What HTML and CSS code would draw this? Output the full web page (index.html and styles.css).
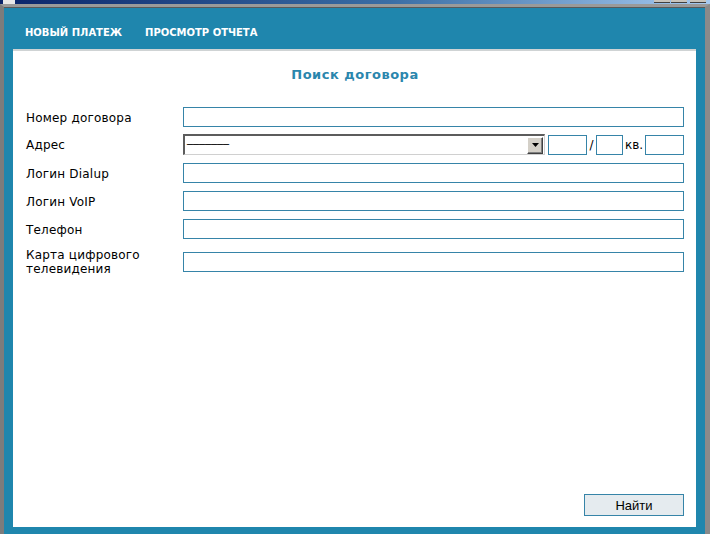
FILE: index.html
```html
<!DOCTYPE html>
<html lang="ru">
<head>
<meta charset="utf-8">
<title>Поиск договора</title>
<link rel="stylesheet" href="styles.css">
</head>
<body>
<div class="window">
  <div class="titlebar">
    <span class="tb-icon"></span>
    <span class="tb-buttons">
      <span class="tb-btn"></span><span class="tb-btn"></span><span class="tb-btn tb-close"></span>
    </span>
  </div>
  <div class="app">
    <nav class="nav">
      <a class="nav-item" href="#">НОВЫЙ ПЛАТЕЖ</a>
      <a class="nav-item" href="#">ПРОСМОТР ОТЧЕТА</a>
    </nav>
    <main class="panel">
      <h1 class="title">Поиск договора</h1>
      <form class="form">
        <div class="row">
          <label class="label">Номер договора</label>
          <input class="field" type="text">
        </div>
        <div class="row row-address">
          <label class="label">Адрес</label>
          <div class="address">
            <div class="select" role="combobox">
              <span class="select-value">───────</span>
              <span class="select-arrow"><svg width="7" height="4" viewBox="0 0 7 4"><path d="M0 0H7L3.5 4Z" fill="#000"/></svg></span>
            </div>
            <input class="field field-house" type="text">
            <span class="sep sep-slash">/</span>
            <input class="field field-corp" type="text">
            <span class="sep sep-kv">кв.</span>
            <input class="field field-flat" type="text">
          </div>
        </div>
        <div class="row">
          <label class="label">Логин Dialup</label>
          <input class="field" type="text">
        </div>
        <div class="row">
          <label class="label">Логин VoIP</label>
          <input class="field" type="text">
        </div>
        <div class="row">
          <label class="label">Телефон</label>
          <input class="field" type="text">
        </div>
        <div class="row">
          <label class="label">Карта цифрового<br>телевидения</label>
          <input class="field" type="text">
        </div>
      </form>
      <div class="actions">
        <button class="btn" type="button">Найти</button>
      </div>
    </main>
  </div>
</div>
</body>
</html>
```
FILE: styles.css
```css
* { box-sizing: border-box; }
html, body { margin: 0; padding: 0; }
body {
  width: 710px;
  height: 534px;
  overflow: hidden;
  background: #1f86ad;
  font-family: "DejaVu Sans", Verdana, sans-serif;
}
.window {
  display: flex;
  flex-direction: column;
  height: 534px;
}
.titlebar {
  height: 4px;
  flex: none;
  display: flex;
  justify-content: space-between;
  background: linear-gradient(to right, #0a246a 0%, #3a6ea5 55%, #a6caf0 100%);
}
.tb-icon {
  width: 12px;
  height: 4px;
  margin-left: 3px;
  background: #e8e8e8;
}
.tb-buttons {
  display: flex;
  gap: 1px;
  margin-right: 4px;
}
.tb-btn {
  width: 16px;
  height: 3px;
  background: #c8c4bc;
  border-bottom: 1px solid #404040;
}
.tb-close { margin-left: 2px; }
.app {
  flex: 1;
  display: flex;
  flex-direction: column;
  background: #1f86ad;
  border-top: 3px solid #9a9a9a;
  box-shadow: inset 0 1px 0 #5a5a5a;
  border-left: 4px solid #7c7c7c;
  border-right: 5px solid #8a8a8a;
}
.nav {
  height: 42px;
  flex: none;
  display: flex;
  align-items: center;
  gap: 23px;
  padding: 9px 0 0 21px;
}
.nav-item {
  color: #fff;
  text-decoration: none;
  font-family: "DejaVu Sans", Verdana, sans-serif;
  font-weight: bold;
  font-size: 10px;
  line-height: 12px;
}
.panel {
  flex: 1;
  display: flex;
  flex-direction: column;
  margin: 0 9px 7px 9px;
  background: #fff;
  border-top: 2px solid #cfd3d4;
  padding: 16px 12px 11px 13px;
}
.title {
  margin: 0 0 24px;
  text-align: center;
  color: #2a86ad;
  font-size: 13px;
  line-height: 16px;
  font-weight: bold;
  letter-spacing: 0.5px;
}
.form {
  display: flex;
  flex-direction: column;
  gap: 8px;
}
.row {
  display: grid;
  grid-template-columns: 157px 1fr;
  align-items: center;
}
.row-address { margin-top: -1px; }
.label {
  font-size: 12px;
  line-height: 14px;
  color: #000;
  letter-spacing: 0.2px;
  padding-top: 1px;
}
.field {
  display: block;
  width: 100%;
  height: 20px;
  margin: 0;
  padding: 0 3px;
  border: 1px solid #3684a8;
  background: #fff;
  font: 12px "DejaVu Sans", sans-serif;
  outline: none;
}
.address {
  display: flex;
  align-items: center;
  height: 21px;
}
.select {
  flex: 1;
  height: 21px;
  display: flex;
  align-items: center;
  justify-content: space-between;
  border-top: 2px solid #5c5c5c;
  border-left: 2px solid #5c5c5c;
  border-bottom: 1px solid #d0d0d0;
  border-right: 1px solid #d0d0d0;
  margin-right: 3px;
}
.select-value {
  padding-left: 2px;
  font-family: "DejaVu Sans Mono", monospace;
  font-size: 10px;
  line-height: 12px;
  color: #000;
  letter-spacing: 0;
}
.select-arrow {
  width: 16px;
  height: 17px;
  margin-right: 1px;
  display: flex;
  align-items: center;
  justify-content: center;
  background: #d4d0c8;
  border-top: 1px solid #fff;
  border-left: 1px solid #fff;
  border-right: 1px solid #404040;
  border-bottom: 1px solid #404040;
  box-shadow: inset -1px -1px 0 #808080;
}
.field-house, .field-flat { width: 39px; flex: none; }
.field-corp { width: 27px; flex: none; }
.sep {
  flex: none;
  font-size: 12px;
  line-height: 14px;
  color: #000;
}
.sep-slash { width: 9px; text-align: center; }
.sep-kv { width: 22px; padding-left: 2px; }
.actions {
  margin-top: auto;
  display: flex;
  justify-content: flex-end;
}
.btn {
  width: 100px;
  height: 22px;
  margin: 0;
  padding: 0;
  background: #e5ebef;
  border: 1px solid #3684a8;
  font: 13px "Liberation Sans", Arial, sans-serif;
  color: #000;
}
```
